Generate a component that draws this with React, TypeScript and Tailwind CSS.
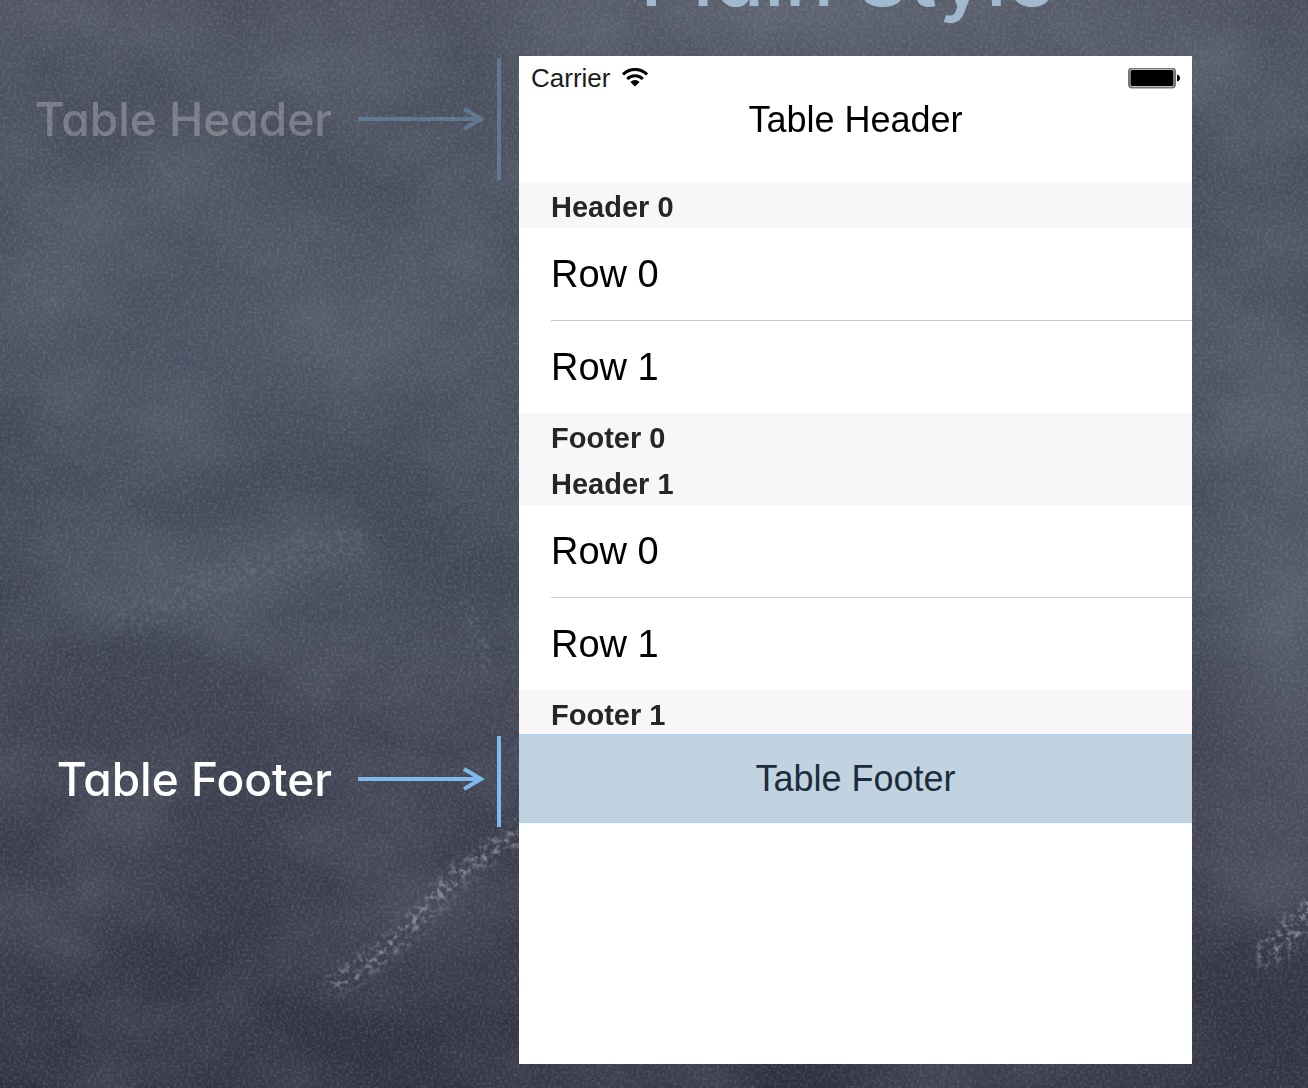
import React from "react";

const sections = [
  { header: "Header 0", rows: ["Row 0", "Row 1"], footer: "Footer 0" },
  { header: "Header 1", rows: ["Row 0", "Row 1"], footer: "Footer 1" },
];

function Chalkboard() {
  return (
    <svg
      aria-hidden="true"
      className="absolute inset-0 -z-10 h-full w-full"
      viewBox="0 0 1308 1088"
      preserveAspectRatio="xMidYMid slice"
    >
      <defs>
        <linearGradient id="board" x1="0" y1="0" x2="0" y2="1">
          <stop offset="0" stopColor="#4a4f5b" />
          <stop offset="0.3" stopColor="#474d5d" />
          <stop offset="0.55" stopColor="#424757" />
          <stop offset="0.75" stopColor="#3c3f4e" />
          <stop offset="1" stopColor="#2f313e" />
        </linearGradient>
        <radialGradient id="glow">
          <stop offset="0" stopColor="#8a90a0" stopOpacity="0.35" />
          <stop offset="1" stopColor="#8a90a0" stopOpacity="0" />
        </radialGradient>
        <radialGradient id="shade">
          <stop offset="0" stopColor="#262a38" stopOpacity="0.35" />
          <stop offset="1" stopColor="#262a38" stopOpacity="0" />
        </radialGradient>
        <filter id="clouds" x="0" y="0" width="100%" height="100%" colorInterpolationFilters="sRGB">
          <feTurbulence type="fractalNoise" baseFrequency="0.006 0.008" numOctaves="5" seed="7" />
          <feColorMatrix values="0 0 0 0 0.6  0 0 0 0 0.62  0 0 0 0 0.68  0.9 0 0 0 -0.33" />
        </filter>
        <filter id="grain" x="0" y="0" width="100%" height="100%" colorInterpolationFilters="sRGB">
          <feTurbulence type="fractalNoise" baseFrequency="0.35" numOctaves="3" seed="3" />
          <feColorMatrix values="0 0 0 0 0.72  0 0 0 0 0.74  0 0 0 0 0.78  1.2 0 0 0 -0.5" />
        </filter>
        <filter id="dust" x="-20%" y="-20%" width="140%" height="140%" colorInterpolationFilters="sRGB">
          <feGaussianBlur in="SourceGraphic" stdDeviation="7" result="soft" />
          <feTurbulence type="fractalNoise" baseFrequency="0.16" numOctaves="5" seed="11" />
          <feColorMatrix
            values="0 0 0 0 1  0 0 0 0 1  0 0 0 0 1  3.4 0 0 0 -1.55"
            result="speck"
          />
          <feComposite in="soft" in2="speck" operator="in" />
        </filter>
      </defs>
      <rect width="1308" height="1088" fill="url(#board)" />
      <ellipse cx="860" cy="10" rx="420" ry="120" fill="url(#glow)" opacity="0.8" />
      <ellipse cx="300" cy="330" rx="280" ry="150" fill="url(#glow)" opacity="0.4" />
      <ellipse cx="220" cy="580" rx="220" ry="80" fill="url(#glow)" opacity="0.5" />
      <ellipse cx="1290" cy="640" rx="110" ry="300" fill="url(#glow)" opacity="0.8" />
      <ellipse cx="20" cy="560" rx="180" ry="200" fill="url(#shade)" opacity="0.5" />
      <ellipse cx="40" cy="1000" rx="260" ry="200" fill="url(#shade)" opacity="0.5" />
      <rect width="1308" height="1088" filter="url(#clouds)" opacity="0.45" />
      <rect width="1308" height="1088" filter="url(#grain)" opacity="0.35" />
      <g fill="none" stroke="#a8adba" strokeLinecap="round" filter="url(#dust)">
        <path d="M335 984 Q400 945 430 905 T525 830" strokeWidth="18" opacity="0.75" />
        <path d="M1268 954 Q1300 925 1330 890" strokeWidth="24" opacity="0.75" />
        <path d="M466 600 L488 672" strokeWidth="8" opacity="0.5" />
        <path d="M130 625 Q220 560 350 545" strokeWidth="36" opacity="0.15" />
      </g>
    </svg>
  );
}

function Callout({ label, dimmed = false }: { label: string; dimmed?: boolean }) {
  return (
    <div className="flex items-center justify-end pr-[18px]">
      <span
        className={
          dimmed
            ? "mr-[26px] font-['Chalkboard','Chalkboard_SE','Inter',sans-serif] text-[46px] leading-none font-medium whitespace-nowrap text-white opacity-25 [font-feature-settings:'cv11']"
            : "mr-[26px] font-['Chalkboard','Chalkboard_SE','Inter',sans-serif] text-[46px] leading-none font-medium whitespace-nowrap text-white [font-feature-settings:'cv11']"
        }
      >
        {label}
      </span>
      <svg
        aria-hidden="true"
        className={dimmed ? "mr-3 h-6 w-[127px] shrink-0 opacity-35" : "mr-3 h-6 w-[127px] shrink-0"}
        viewBox="0 0 127 24"
        fill="none"
        stroke="#7fb8ea"
        strokeWidth="4"
      >
        <path d="M0 12H123" />
        <path d="M106 2L123 12L106 22" />
      </svg>
      <div
        className={
          dimmed
            ? "my-0.5 w-1 self-stretch bg-[#7fb8ea] opacity-35"
            : "mt-0.5 -mb-1 w-1 self-stretch bg-[#7fb8ea]"
        }
      />
    </div>
  );
}

function StatusBar() {
  return (
    <div className="flex h-11 items-center justify-between px-3">
      <div className="flex items-center gap-3">
        <span className="text-[26px] leading-none text-[#1c1c1c]">Carrier</span>
        <svg aria-label="Wi-Fi" role="img" className="h-5 w-[26px]" viewBox="0 0 26 20">
          <g fill="none" stroke="#000" strokeWidth="3">
            <path d="M1 6.4A17 17 0 0 1 25 6.4" />
            <path d="M5.2 11A11 11 0 0 1 20.8 11" />
          </g>
          <path d="M13 18.5L8.4 13.9A6.5 6.5 0 0 1 17.6 13.9Z" fill="#000" />
        </svg>
      </div>
      <svg aria-label="Battery full" role="img" className="h-[21px] w-[52px]" viewBox="0 0 52 21">
        <rect x="1" y="0.5" width="46" height="19" rx="3" fill="#fff" stroke="#777" strokeWidth="2" />
        <rect x="2.5" y="2" width="43" height="16" rx="1.5" fill="#000" />
        <path d="M49 6.5Q52 7 52 10T49 13.5Z" fill="#000" />
      </svg>
    </div>
  );
}

function SectionLabel({ children }: { children: React.ReactNode }) {
  return (
    <div className="flex h-[46px] items-center bg-[#f7f7f7] pt-1 pl-8 text-[29px] leading-none font-bold text-[#262626]">
      {children}
    </div>
  );
}

export default function App() {
  return (
    <main className="relative isolate grid min-h-screen grid-cols-[519fr_673fr_116fr] grid-rows-[56px_126px_auto_89px_1fr] overflow-hidden bg-[#454958] pb-6 font-['Liberation_Sans',Arial,sans-serif]">
      <Chalkboard />

      <header className="col-start-2 flex items-end justify-center pr-4 pb-[38px]">
        <h1 className="font-['Chalkboard','Chalkboard_SE','Inter',sans-serif] text-[82px] leading-none font-medium whitespace-nowrap text-[#a0b9ce] [font-feature-settings:'cv11']">
          Plain Style
        </h1>
      </header>

      <div className="col-start-1 row-start-2 grid">
        <Callout label="Table Header" dimmed />
      </div>
      <div className="col-start-2 row-start-2 bg-white">
        <StatusBar />
        <h2 className="text-center text-[36px] leading-[40px] text-black">Table Header</h2>
      </div>

      <div className="col-start-2 row-start-3 -mb-0.5 bg-white">
        {sections.map((section) => (
          <section key={section.header}>
            <SectionLabel>{section.header}</SectionLabel>
            <ul className="divide-y divide-[#c8c7cc] pl-8">
              {section.rows.map((row) => (
                <li key={row} className="text-[38px] leading-[92px] text-black">
                  {row}
                </li>
              ))}
            </ul>
            <SectionLabel>{section.footer}</SectionLabel>
          </section>
        ))}
      </div>

      <div className="col-start-1 row-start-4 grid">
        <Callout label="Table Footer" />
      </div>
      <div className="z-10 col-start-2 row-start-4 flex items-center justify-center border-y border-[#a9d2f0] bg-[#c1d2e0] text-[36px] leading-none text-[#1b2d3b]">
        Table Footer
      </div>

      <div className="col-start-2 row-start-5 bg-white" />
    </main>
  );
}
